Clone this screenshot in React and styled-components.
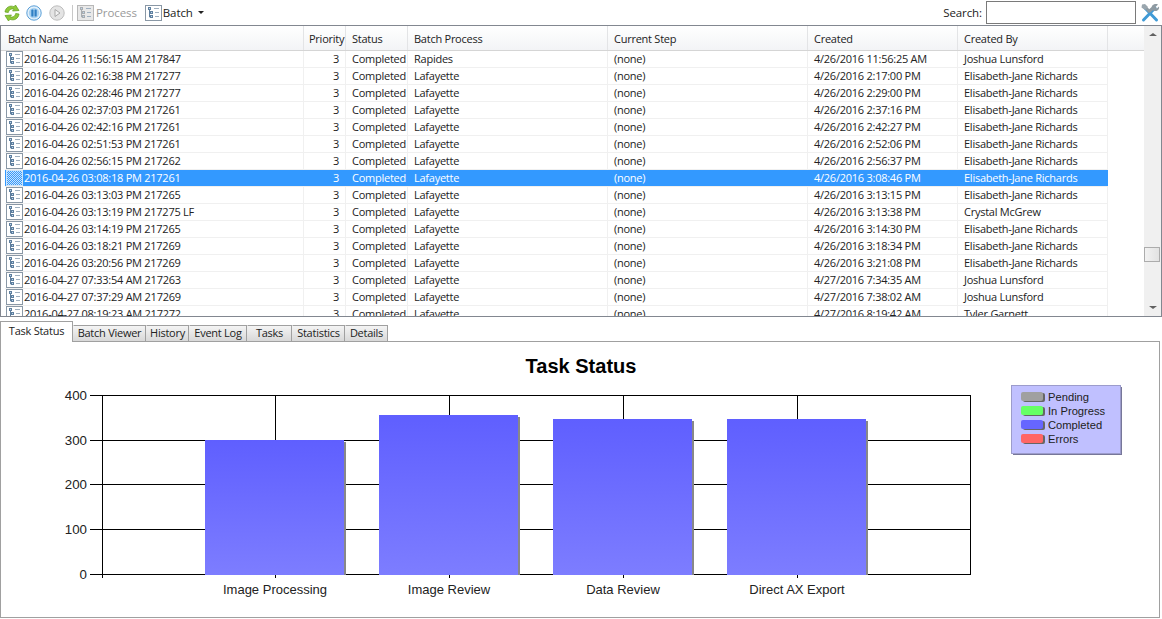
import React from 'react';
import styled, { createGlobalStyle } from 'styled-components';

const GlobalStyle = createGlobalStyle`
  html, body {
    margin: 0;
    padding: 0;
    background: #fff;
  }
  body {
    font-family: "Open Sans", "Liberation Sans", sans-serif;
    font-size: 11px;
    letter-spacing: -0.25px;
    color: #222;
  }
`;

const Page = styled.div`
  width: 1162px;
  height: 619px;
  display: flex;
  flex-direction: column;
  overflow: hidden;
`;

const Toolbar = styled.div`
  height: 25px;
  flex: none;
  display: flex;
  align-items: center;
  padding: 0 2px 0 4px;
  box-sizing: border-box;
`;

const ToolIcon = styled.svg`
  flex: none;
  display: block;
  margin-right: ${(p) => p.$gap || 0}px;
`;

const ToolSep = styled.div`
  width: 1px;
  height: 16px;
  background: #c8c8c8;
  margin: 0 4px 0 7px;
`;

const ToolLabel = styled.span`
  font-size: 11.5px;
  letter-spacing: -0.1px;
  color: ${(p) => (p.$disabled ? '#9a9a9a' : '#222')};
  margin-right: ${(p) => p.$gap || 0}px;
`;

const Caret = styled.span`
  width: 0;
  height: 0;
  border-left: 3px solid transparent;
  border-right: 3px solid transparent;
  border-top: 3px solid #222;
  margin-left: 5px;
`;

const SearchArea = styled.div`
  margin-left: auto;
  display: flex;
  align-items: center;
`;

const SearchLabel = styled.span`
  font-size: 11.5px;
  letter-spacing: -0.1px;
  margin-right: 4px;
`;

const SearchInput = styled.div`
  width: 150px;
  height: 23px;
  box-sizing: border-box;
  border: 1px solid #7a7a7a;
  background: #fff;
  margin-right: 4px;
`;

const GridFrame = styled.div`
  height: 292px;
  flex: none;
  box-sizing: border-box;
  border: 1px solid #828790;
  display: flex;
  background: #fff;
`;

const GridBody = styled.div`
  flex: 1;
  min-width: 0;
  overflow: hidden;
`;

const HeaderRow = styled.div`
  height: 25px;
  display: flex;
  box-sizing: border-box;
  border-bottom: 1px solid #d5d5d5;
  background: linear-gradient(#ffffff, #f3f4f6);
`;

const HeaderCell = styled.div`
  width: ${(p) => p.$w}px;
  flex: none;
  box-sizing: border-box;
  padding-left: ${(p) => p.$pad}px;
  line-height: 25px;
  border-right: 1px solid #e3e4e6;
  white-space: nowrap;
`;

const HeaderFill = styled.div`
  flex: 1;
`;

const Row = styled.div`
  height: 17px;
  width: 1103px;
  margin-left: 4px;
  display: flex;
  box-sizing: border-box;
  border-bottom: 1px solid #f0f0f0;
  background: ${(p) => (p.$selected ? '#3399ff' : 'transparent')};
  color: ${(p) => (p.$selected ? '#fff' : '#222')};
`;

const Cell = styled.div`
  width: ${(p) => p.$w}px;
  flex: none;
  box-sizing: border-box;
  padding: ${(p) => (p.$right ? '0 6px 0 0' : '0 0 0 6px')};
  text-align: ${(p) => (p.$right ? 'right' : 'left')};
  line-height: 16px;
  white-space: nowrap;
  overflow: hidden;
  border-right: 1px solid ${(p) => (p.$selected ? '#3399ff' : '#f0f0f0')};
`;

const NameCell = styled(Cell)`
  display: flex;
  align-items: center;
  padding: 0 0 0 1px;
`;

const NameText = styled.span`
  margin-left: 1px;
`;

const ScrollBar = styled.div`
  width: 17px;
  flex: none;
  margin-left: auto;
  background: #f0f0f0;
  display: flex;
  flex-direction: column;
  align-items: center;
`;

const ScrollArrow = styled.div`
  height: 17px;
  flex: none;
  display: flex;
  align-items: center;
  justify-content: center;
  &::after {
    content: '';
    width: 0;
    height: 0;
    border-left: 4px solid transparent;
    border-right: 4px solid transparent;
    ${(p) => (p.$up ? 'border-bottom: 3px solid #606060;' : 'border-top: 3px solid #606060;')}
  }
`;

const ScrollTrack = styled.div`
  flex: 1;
  align-self: stretch;
  padding-top: 204px;
`;

const ScrollThumb = styled.div`
  height: 15px;
  box-sizing: border-box;
  margin: 0 1px 0 0;
  border: 1px solid #acacac;
  background: linear-gradient(90deg, #f2f2f2, #e2e2e2);
`;

const TabStrip = styled.div`
  height: 21px;
  flex: none;
  margin-top: 4px;
  display: flex;
  align-items: flex-end;
  position: relative;
  z-index: 1;
  margin-bottom: -1px;
`;

const Tab = styled.div`
  width: ${(p) => p.$w}px;
  flex: none;
  box-sizing: border-box;
  height: ${(p) => (p.$active ? 21 : 17)}px;
  border: 1px solid #a0a0a0;
  border-left-color: ${(p) => (p.$active ? '#a0a0a0' : 'transparent')};
  border-bottom: ${(p) => (p.$active ? 'none' : '1px solid #a0a0a0')};
  background: ${(p) => (p.$active ? '#fff' : 'linear-gradient(#f4f4f4, #d8d8d8)')};
  text-align: center;
  line-height: ${(p) => (p.$active ? 17 : 14)}px;
  white-space: nowrap;
  color: #222;
`;

const ChartPanel = styled.div`
  width: 1160px;
  height: 277px;
  flex: none;
  box-sizing: border-box;
  border: 1px solid #a0a0a0;
  background: #fff;
`;

const ChartSvg = styled.svg`
  display: block;
  letter-spacing: 0;
`;

const COLUMNS = [
  { w: 299, title: 'Batch Name' },
  { w: 42, title: 'Priority' },
  { w: 62, title: 'Status' },
  { w: 200, title: 'Batch Process' },
  { w: 200, title: 'Current Step' },
  { w: 150, title: 'Created' },
  { w: 150, title: 'Created By' },
];

const JOSHUA = 'Joshua Lunsford';
const EJ = 'Elisabeth-Jane Richards';

const ROWS = [
  ['2016-04-26 11:56:15 AM 217847', 'Rapides', '4/26/2016 11:56:25 AM', JOSHUA],
  ['2016-04-26 02:16:38 PM 217277', 'Lafayette', '4/26/2016 2:17:00 PM', EJ],
  ['2016-04-26 02:28:46 PM 217277', 'Lafayette', '4/26/2016 2:29:00 PM', EJ],
  ['2016-04-26 02:37:03 PM 217261', 'Lafayette', '4/26/2016 2:37:16 PM', EJ],
  ['2016-04-26 02:42:16 PM 217261', 'Lafayette', '4/26/2016 2:42:27 PM', EJ],
  ['2016-04-26 02:51:53 PM 217261', 'Lafayette', '4/26/2016 2:52:06 PM', EJ],
  ['2016-04-26 02:56:15 PM 217262', 'Lafayette', '4/26/2016 2:56:37 PM', EJ],
  ['2016-04-26 03:08:18 PM 217261', 'Lafayette', '4/26/2016 3:08:46 PM', EJ],
  ['2016-04-26 03:13:03 PM 217265', 'Lafayette', '4/26/2016 3:13:15 PM', EJ],
  ['2016-04-26 03:13:19 PM 217275 LF', 'Lafayette', '4/26/2016 3:13:38 PM', 'Crystal McGrew'],
  ['2016-04-26 03:14:19 PM 217265', 'Lafayette', '4/26/2016 3:14:30 PM', EJ],
  ['2016-04-26 03:18:21 PM 217269', 'Lafayette', '4/26/2016 3:18:34 PM', EJ],
  ['2016-04-26 03:20:56 PM 217269', 'Lafayette', '4/26/2016 3:21:08 PM', EJ],
  ['2016-04-27 07:33:54 AM 217263', 'Lafayette', '4/27/2016 7:34:35 AM', JOSHUA],
  ['2016-04-27 07:37:29 AM 217269', 'Lafayette', '4/27/2016 7:38:02 AM', JOSHUA],
  ['2016-04-27 08:19:23 AM 217272', 'Lafayette', '4/27/2016 8:19:42 AM', 'Tyler Garnett'],
];

const TABS = [
  { label: 'Task Status', w: 73, active: true },
  { label: 'Batch Viewer', w: 73 },
  { label: 'History', w: 43 },
  { label: 'Event Log', w: 58 },
  { label: 'Tasks', w: 45 },
  { label: 'Statistics', w: 53 },
  { label: 'Details', w: 43 },
];

const BARS = [
  { label: 'Image Processing', x: 205, top: 440 },
  { label: 'Image Review', x: 379, top: 415 },
  { label: 'Data Review', x: 553, top: 419 },
  { label: 'Direct AX Export', x: 727, top: 419 },
];

const LEGEND = [
  { label: 'Pending', color: '#a0a0a0' },
  { label: 'In Progress', color: '#66ff66' },
  { label: 'Completed', color: '#6666ff' },
  { label: 'Errors', color: '#ff6666' },
];

const Y_TICKS = [
  { label: '400', y: 395 },
  { label: '300', y: 440 },
  { label: '200', y: 484 },
  { label: '100', y: 529 },
  { label: '0', y: 574 },
];

const BatchIcon = ({ selected, faded, gap }) => {
  const line = faded ? '#a8acb0' : '#5f7f9e';
  return (
    <ToolIcon $gap={gap} width="17" height="16" viewBox="0 0 17 16">
      <defs>
        <pattern id="dither" width="2" height="2" patternUnits="userSpaceOnUse">
          <rect width="2" height="2" fill="#3399ff" />
          <rect width="1" height="1" fill="#cfe4f7" />
          <rect x="1" y="1" width="1" height="1" fill="#cfe4f7" />
        </pattern>
      </defs>
      <rect x="0.5" y="0.5" width="16" height="15" fill={selected ? 'url(#dither)' : faded ? '#e8e8e8' : '#fff'} stroke={selected ? '#cfe4f7' : faded ? '#b8b8b8' : '#8a98a6'} />
      {!selected && (
        <g stroke={line} fill="none">
          <rect x="3.5" y="2.5" width="2" height="2" fill="#bcd6ee" />
          <rect x="5.5" y="6.5" width="2" height="2" fill="#bcd6ee" />
          <rect x="5.5" y="10.5" width="2" height="2" fill="#bcd6ee" />
          <path d="M4.5 5v7h1M4.500 7.500h1" />
          <path d="M9 3.500h5M10 7.500h4M10 11.500h4" stroke="#9fb0c0" />
        </g>
      )}
    </ToolIcon>
  );
};

const RefreshIcon = () => (
  <ToolIcon $gap={6} width="16" height="18" viewBox="0 0 16 18">
    <path d="M1 8C1.500 3.500 6 .8 10 2.800L11.500 1 15 6.500 8.500 7 10 5.300C7.500 4.200 5 5.500 4.300 8.500Z" fill="#8fc93a" stroke="#5f9c1a" strokeWidth="0.7" />
    <path d="M15 10C14.500 14.500 10 17.200 6 15.200L4.500 17 1 11.500 7.500 11 6 12.700C8.500 13.800 11 12.500 11.700 9.500Z" fill="#8fc93a" stroke="#5f9c1a" strokeWidth="0.7" />
  </ToolIcon>
);

const PauseIcon = () => (
  <ToolIcon $gap={7} width="16" height="16" viewBox="0 0 16 16">
    <circle cx="8" cy="8" r="7.200" fill="#e3f1fb" stroke="#5a9fd8" />
    <circle cx="8" cy="8" r="5.200" fill="#a9d2f2" />
    <rect x="5.300" y="4.500" width="2.200" height="7" rx="0.600" fill="#2f7fc4" />
    <rect x="8.500" y="4.500" width="2.200" height="7" rx="0.600" fill="#2f7fc4" />
  </ToolIcon>
);

const PlayIcon = () => (
  <ToolIcon width="16" height="16" viewBox="0 0 16 16">
    <circle cx="8" cy="8" r="7.200" fill="#e4e4e4" stroke="#bdbdbd" />
    <path d="M6 4.500v7l5-3.500z" fill="#f4f4f4" stroke="#a8a8a8" />
  </ToolIcon>
);

const ToolsIcon = () => (
  <ToolIcon width="20" height="20" viewBox="0 0 20 20">
    <path d="M5 5L16.500 17" stroke="#3f9ad6" strokeWidth="3" strokeLinecap="round" />
    <path d="M15 5L3.500 17" stroke="#3f9ad6" strokeWidth="3" strokeLinecap="round" />
    <path d="M10 9L5 4" stroke="#8e9aa2" strokeWidth="3" />
    <path d="M2 1.500L5 1l3 3-3 3-3.500-2.500z" fill="#9aa6ae" />
    <path d="M9 8.500L13 5" stroke="#8e9aa2" strokeWidth="3" />
    <path d="M12 3c1.500-2 4-2.500 6-1.500L15.500 4l1.300 1.500L19 3.500c.5 2-.5 4-2.500 4.500-1.500.3-3 0-4-1.200C11.700 5.500 11.300 4.200 12 3z" fill="#8e9aa2" />
  </ToolIcon>
);

const Chart = () => (
  <ChartSvg width="1158" height="275" viewBox="1 342 1158 275">
    <defs>
      <linearGradient id="barFill" x1="0" y1="0" x2="0" y2="1">
        <stop offset="0" stopColor="#5f5fff" />
        <stop offset="1" stopColor="#7d7dff" />
      </linearGradient>
    </defs>
    <text x="581" y="373" textAnchor="middle" fontFamily="Liberation Sans" fontWeight="700" fontSize="20" fill="#000">Task Status</text>
    <g stroke="#000" strokeWidth="1" shapeRendering="crispEdges">
      {Y_TICKS.map((t) => (
        <line key={t.label} x1="90" x2="971" y1={t.y + 0.5} y2={t.y + 0.5} />
      ))}
      <line x1="102.500" x2="102.500" y1="395" y2="578" />
      <line x1="970.500" x2="970.500" y1="395" y2="575" />
      {BARS.map((b) => (
        <line key={b.label} x1={b.x + 70.5} x2={b.x + 70.5} y1="395" y2="578" />
      ))}
    </g>
    {Y_TICKS.map((t) => (
      <text key={t.label} x="87" y={t.y + 5} textAnchor="end" fontFamily="Liberation Sans" fontSize="13.300" fill="#222">{t.label}</text>
    ))}
    {BARS.map((b) => (
      <g key={b.label}>
        <rect x={b.x + 2} y={b.top + 2} width="139" height={573 - b.top} fill="#888" />
        <rect x={b.x} y={b.top} width="139" height={575 - b.top} fill="url(#barFill)" />
        <text x={b.x + 70} y="594" textAnchor="middle" fontFamily="Liberation Sans" fontSize="13" fill="#222">{b.label}</text>
      </g>
    ))}
    <rect x="1013" y="387" width="109" height="68" fill="#777799" />
    <rect x="1011.500" y="385.500" width="109" height="68" fill="#c0c0ff" stroke="#9c9ccc" />
    {LEGEND.map((l, i) => (
      <g key={l.label}>
        <rect x="1023" y={393 + i * 14} width="22" height="9" rx="2" fill="#666" />
        <rect x="1021" y={392 + i * 14} width="22" height="9" rx="2" fill={l.color} />
        <text x="1048" y={401 + i * 14} fontFamily="Liberation Sans" fontSize="11.200" fill="#222">{l.label}</text>
      </g>
    ))}
  </ChartSvg>
);

export default function App() {
  return (
    <Page>
      <GlobalStyle />
      <Toolbar>
        <RefreshIcon />
        <PauseIcon />
        <PlayIcon />
        <ToolSep />
        <BatchIcon faded gap={2} />
        <ToolLabel $disabled $gap={8}>Process</ToolLabel>
        <BatchIcon gap={1} />
        <ToolLabel>Batch</ToolLabel>
        <Caret />
        <SearchArea>
          <SearchLabel>Search:</SearchLabel>
          <SearchInput />
          <ToolsIcon />
        </SearchArea>
      </Toolbar>
      <GridFrame>
        <GridBody>
          <HeaderRow>
            {COLUMNS.map((c, i) => (
              <HeaderCell key={c.title} $w={i === 0 ? 303 : c.w} $pad={i === 0 ? 7 : i === 1 ? 5 : 6}>{c.title}</HeaderCell>
            ))}
            <HeaderFill />
          </HeaderRow>
          {ROWS.map((r, i) => {
            const selected = i === 7;
            return (
              <Row key={r[0]} $selected={selected}>
                <NameCell $w={299} $selected={selected}>
                  <BatchIcon selected={selected} />
                  <NameText>{r[0]}</NameText>
                </NameCell>
                <Cell $w={42} $right $selected={selected}>3</Cell>
                <Cell $w={62} $selected={selected}>Completed</Cell>
                <Cell $w={200} $selected={selected}>{r[1]}</Cell>
                <Cell $w={200} $selected={selected}>(none)</Cell>
                <Cell $w={150} $selected={selected}>{r[2]}</Cell>
                <Cell $w={150} $selected={selected}>{r[3]}</Cell>
              </Row>
            );
          })}
        </GridBody>
        <ScrollBar>
          <ScrollArrow $up />
          <ScrollTrack>
            <ScrollThumb />
          </ScrollTrack>
          <ScrollArrow />
        </ScrollBar>
      </GridFrame>
      <TabStrip>
        {TABS.map((t) => (
          <Tab key={t.label} $w={t.w} $active={t.active}>{t.label}</Tab>
        ))}
      </TabStrip>
      <ChartPanel>
        <Chart />
      </ChartPanel>
    </Page>
  );
}
